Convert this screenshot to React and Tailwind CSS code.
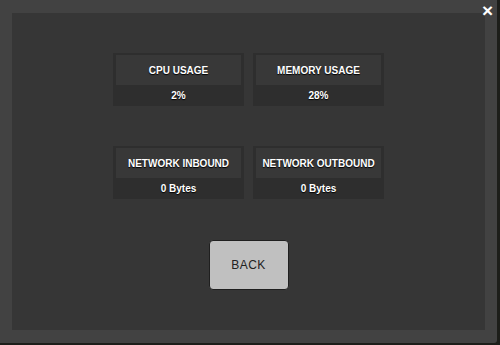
import React from 'react'

const STATS = [
  [
    { label: 'CPU USAGE', value: '2%' },
    { label: 'MEMORY USAGE', value: '28%' },
  ],
  [
    { label: 'NETWORK INBOUND', value: '0 Bytes' },
    { label: 'NETWORK OUTBOUND', value: '0 Bytes' },
  ],
]

function StatCard({ label, value }) {
  return (
    <div className="w-[131px] h-[53px] bg-[#2e2e2e] px-[3px] pt-[2px] flex flex-col">
      <div className="h-[30px] bg-[#383838] flex items-center justify-center text-[10px] font-bold text-white [text-shadow:0_1px_1px_#000]">
        {label}
      </div>
      <div className="flex-1 flex items-center justify-center text-[10px] font-bold text-white [text-shadow:0_1px_1px_#000]">
        {value}
      </div>
    </div>
  )
}

export default function App() {
  return (
    <div className="w-[500px] h-[345px] bg-[#1d1e1a]" style={{ fontFamily: '"Liberation Sans", Arial, sans-serif' }}>
      <div className="relative w-[497px] h-[343px] bg-[#424242] rounded-br-[3px] pl-[12px] pt-[13px]">
        {/* Close */}
        <button className="absolute top-[1px] right-[4px] text-white font-bold text-[19px] leading-none">×</button>

        {/* Panel */}
        <div className="w-[473px] h-[317px] bg-[#363636] flex flex-col items-center pt-[40px]">
          <div className="flex flex-col gap-[40px]">
            {STATS.map((row, i) => (
              <div key={i} className="flex gap-[9px]">
                {row.map((s) => (
                  <StatCard key={s.label} {...s} />
                ))}
              </div>
            ))}
          </div>

          <button className="mt-[41px] w-[80px] h-[50px] bg-[#c0c0c0] border border-[#1f1f1f] rounded-[4px] text-[12px] text-[#222] tracking-[0.5px]">
            BACK
          </button>
        </div>
      </div>
    </div>
  )
}
